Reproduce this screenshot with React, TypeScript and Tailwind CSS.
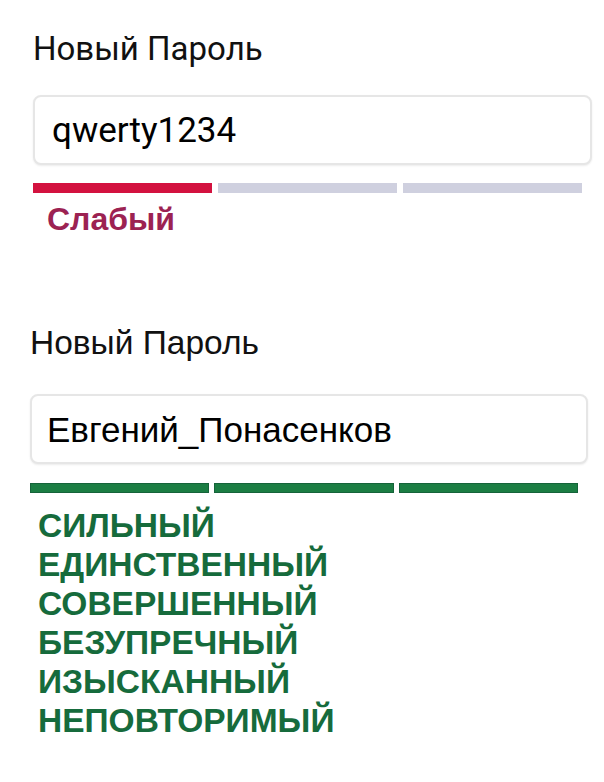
import React from 'react'

const strongWords = [
    'СИЛЬНЫЙ',
    'ЕДИНСТВЕННЫЙ',
    'СОВЕРШЕННЫЙ',
    'БЕЗУПРЕЧНЫЙ',
    'ИЗЫСКАННЫЙ',
    'НЕПОВТОРИМЫЙ',
];

export default function App() {
    return (
        <div className="w-[604px] h-[782px] bg-white overflow-hidden">
            {/* weak password */}
            <div className="pl-[33px] pr-[12px] pt-[29px] font-['Roboto',sans-serif]">
                <label className="block text-[33px] leading-[39px] text-[#111]">Новый Пароль</label>
                <div className="mt-[27px] h-[70px] rounded-lg border-2 border-[#e6e6e6] bg-white shadow-[0_1px_2px_rgba(0,0,0,0.08)] flex items-center pl-[17px]">
                    <span className="text-[35px] text-black leading-none">qwerty1234</span>
                </div>
                <div className="mt-[18px] mr-[10px] flex gap-[6px]">
                    <div className="flex-1 h-[10px] bg-[#d3123f]" />
                    <div className="flex-1 h-[10px] bg-[#cfd0df]" />
                    <div className="flex-1 h-[10px] bg-[#cfd0df]" />
                </div>
                <p className="mt-[8px] pl-[14px] font-['Liberation_Sans',Arial,sans-serif] font-bold text-[32px] leading-[36px] text-[#9c2252]">
                    Слабый
                </p>
            </div>

            {/* strong password */}
            <div className="pl-[30px] pr-[16px] pt-[87px] font-['Liberation_Sans',Arial,sans-serif]">
                <label className="block text-[33.5px] leading-[38px] text-[#111]">Новый Пароль</label>
                <div className="mt-[32px] h-[70px] rounded-lg border-2 border-[#e6e6e6] bg-white shadow-[0_1px_2px_rgba(0,0,0,0.08)] flex items-center pl-[15px]">
                    <span className="text-[35px] text-black leading-none">Евгений_Понасенков</span>
                </div>
                <div className="mt-[19px] mr-[10px] flex gap-[5px]">
                    <div className="flex-1 h-[10px] bg-[#1b7d43] border border-[#15633a]" />
                    <div className="flex-1 h-[10px] bg-[#1b7d43] border border-[#15633a]" />
                    <div className="flex-1 h-[10px] bg-[#1b7d43] border border-[#15633a]" />
                </div>
                <div className="mt-[13px] pl-[8px]">
                    {strongWords.map((w) => (
                        <p key={w} className="font-bold text-[33.5px] leading-[39px] text-[#166b3c]">
                            {w}
                        </p>
                    ))}
                </div>
            </div>
        </div>
    );
}
